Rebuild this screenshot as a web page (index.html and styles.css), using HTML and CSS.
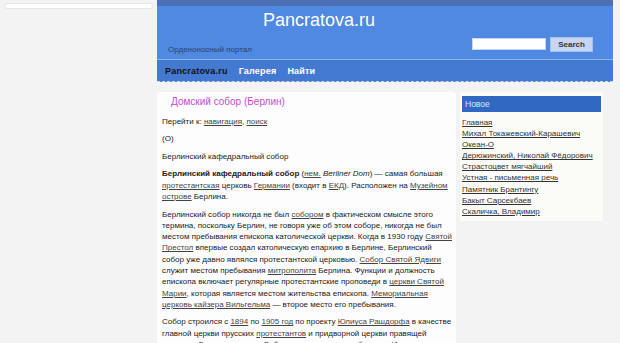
FILE: index.html
```html
<!DOCTYPE html>
<html lang="ru">
<head>
    <meta charset="UTF-8">
    <meta name="viewport" content="width=device-width, initial-scale=1.0">
    <title>Домский собор (Берлин) - Pancratova.ru</title>
    <link rel="stylesheet" href="styles.css">
</head>
<body>
    <div class="page">
        <!-- Left column -->
        <div class="leftcol">
            <div class="leftbar"></div>
        </div>

        <!-- Main column -->
        <div class="main">
            <div class="header">
                <div class="topstrip"></div>
                <div class="masthead">
                    <div class="site-title">Pancratova.ru</div>
                    <div class="masthead-row">
                        <div class="tagline">Орденоносный портал</div>
                        <form class="search" onsubmit="return false">
                            <input type="text" class="search-input">
                            <button type="submit" class="search-btn">Search</button>
                        </form>
                    </div>
                </div>
                <div class="nav">
                    <a href="#" class="nav-item active">Pancratova.ru</a>
                    <a href="#" class="nav-item">Галерея</a>
                    <a href="#" class="nav-item">Найти</a>
                </div>
            </div>

            <div class="content-row">
                <div class="article">
                    <h1 class="article-title">Домский собор (Берлин)</h1>
                    <p>Перейти к: <a href="#">навигация</a>, <a href="#">поиск</a></p>
                    <p>(О)</p>
                    <p>Берлинский кафедральный собор</p>
                    <p><b>Берлинский кафедральный собор</b> (<a href="#">нем.</a> <i>Berliner Dom</i>) — самая большая <a href="#">протестантская</a> церковь <a href="#">Германии</a> (входит в <a href="#">ЕКД</a>). Расположен на <a href="#">Музейном острове</a> Берлина.</p>
                    <p>Берлинский собор никогда не был <a href="#">собором</a> в фактическом смысле этого термина, поскольку Берлин, не говоря уже об этом соборе, никогда не был местом пребывания епископа католической церкви. Когда в 1930 году <a href="#">Святой Престол</a> впервые создал католическую епархию в Берлине, Берлинский собор уже давно являлся протестантской церковью. <a href="#">Собор Святой Ядвиги</a> служит местом пребывания <a href="#">митрополита</a> Берлина. Функции и должность епископа включает регулярные протестантские проповеди в <a href="#">церкви Святой Марии</a>, которая является местом жительства епископа. <a href="#">Мемориальная церковь кайзера Вильгельма</a> — второе место его пребывания.</p>
                    <p>Собор строился с <a href="#">1894</a> по <a href="#">1905 год</a> по проекту <a href="#">Юлиуса Рашдорфа</a> в качестве главной церкви прусских <a href="#">протестантов</a> и придворной церкви правящей династии Гогенцоллернов. Собор выполнен в стиле <a href="#">барокко</a>. Изначально более высокий купол был упрощён при восстановлении.</p>
                </div>

                <div class="sidebar">
                    <div class="sidebar-title">Новое</div>
                    <ul class="sidebar-list">
                        <li><a href="#">Главная</a></li>
                        <li><a href="#">Михал Токажевский-Карашевич</a></li>
                        <li><a href="#">Океан-О</a></li>
                        <li><a href="#">Дерюжинский, Николай Фёдорович</a></li>
                        <li><a href="#">Страстоцвет мягчайший</a></li>
                        <li><a href="#">Устная - письменная речь</a></li>
                        <li><a href="#">Памятник Брантингу</a></li>
                        <li><a href="#">Бакыт Сарсекбаев</a></li>
                        <li><a href="#">Скаличка, Владимир</a></li>
                    </ul>
                </div>
            </div>
        </div>
    </div>
</body>
</html>
```

FILE: styles.css
```css
body {
    margin: 0;
    background-color: #f3f3f3;
    font-family: "Liberation Sans", Arial, sans-serif;
    color: #222;
}
.page {
    display: flex;
    align-items: flex-start;
}
.leftcol {
    width: 157px;
    flex-shrink: 0;
}
.leftbar {
    margin: 3px 4px 0 4px;
    height: 4px;
    background-color: #fff;
    border: 1px solid #e6e6e6;
    border-radius: 4px;
}
.main {
    width: 456px;
    flex-shrink: 0;
}
.header {
    background-color: #4f89e1;
}
.topstrip {
    height: 6px;
    background-color: #4d6fb6;
}
.masthead {
    height: 53px;
    border-bottom: 1px solid #8fb3ee;
}
.site-title {
    padding: 5px 0 0 106px;
    font-size: 18px;
    line-height: 19px;
    color: #fff;
}
.masthead-row {
    display: flex;
    justify-content: space-between;
    align-items: center;
    padding: 4px 20px 0 11px;
}
.tagline {
    font-size: 8px;
    color: #2e4468;
    margin-top: 11px;
}
.search {
    display: flex;
    align-items: center;
    gap: 4px;
}
.search-input {
    width: 74px;
    height: 12px;
    padding: 0;
    border: 1px solid #c8d6f0;
    background-color: #fff;
    box-sizing: border-box;
}
.search-btn {
    width: 43px;
    height: 15px;
    padding: 0;
    font-family: "Liberation Sans", Arial, sans-serif;
    font-size: 8px;
    font-weight: bold;
    color: #333;
    background-color: #c6d6f2;
    border: 1px solid #a9c0ea;
}
.nav {
    height: 21px;
    display: flex;
    align-items: center;
    gap: 11px;
    padding-left: 8px;
    background-color: #4479d2;
    border-bottom: 1px dashed #c9d8f2;
}
.nav-item {
    font-size: 9px;
    font-weight: bold;
    letter-spacing: 0.2px;
    color: #fff;
    text-decoration: none;
}
.nav-item.active {
    color: #111;
}
.content-row {
    display: flex;
    align-items: flex-start;
    margin-top: 10px;
}
.article {
    width: 299px;
    flex-shrink: 0;
    box-sizing: border-box;
    padding: 3px 0 0 5px;
    background-color: #fdfdfd;
    border-radius: 4px 4px 0 0;
    font-size: 8px;
    line-height: 11.3px;
    height: 260px;
    overflow: hidden;
}
.article-title {
    margin: 0 0 8px 0;
    padding-left: 9px;
    font-size: 10px;
    line-height: 13px;
    font-weight: normal;
    color: #c04fcd;
}
.article p {
    margin: 0 0 6.2px 0;
}
.article a {
    color: #444;
}
.sidebar {
    width: 143px;
    margin-left: 4px;
    box-sizing: border-box;
    padding: 4px 2px 4px 2px;
    background-color: #fbfbf8;
}
.sidebar-title {
    height: 16px;
    line-height: 16px;
    padding-left: 3px;
    font-size: 8.5px;
    color: #dde6f6;
    background-color: #3169c2;
}
.sidebar-list {
    list-style: none;
    margin: 5px 0 0 0;
    padding: 0;
    font-size: 8px;
    line-height: 11.1px;
}
.sidebar-list a {
    color: #333;
}
```
